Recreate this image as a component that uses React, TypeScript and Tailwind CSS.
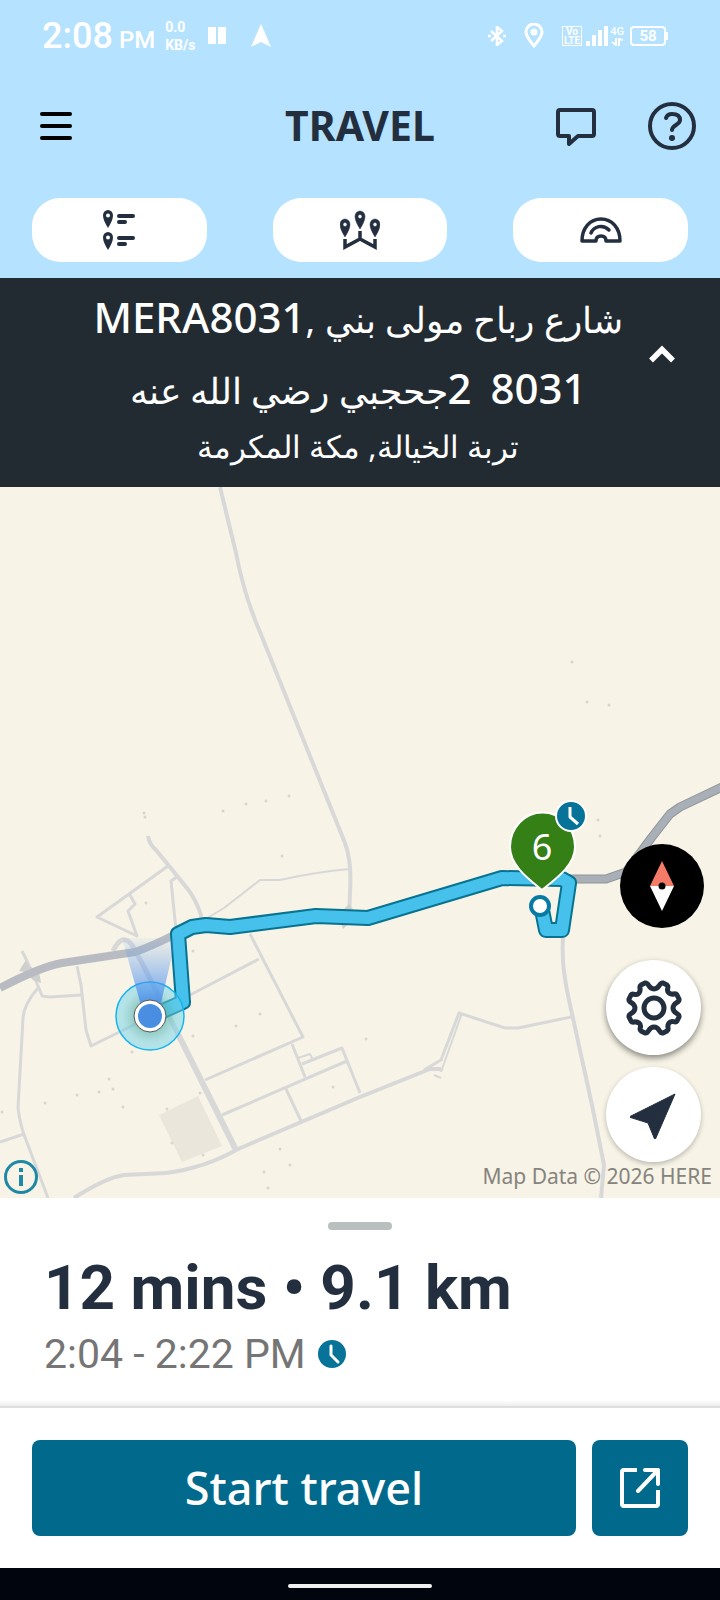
import { ChevronUp } from "lucide-react";

const ROADS = [
  { d: "M220 487 L236 553 Q244 595 260 632 L345 843 Q352 862 350 892 L349 920", w: 4 },
  { d: "M148 836 Q149 844 156 850 L174 872 L190 892 Q200 908 202 920", w: 4 },
  { d: "M168 866 L97 917 L137 936 L128 911 L135 904 L130 895", w: 3 },
  { d: "M178 876 L171 881 L176 930", w: 3 },
  { d: "M204 920 L224 908 L260 880 L280 880 Q315 872 350 869", w: 2 },
  { d: "M22 951 L28 963 Q40 990 42 996 L50 997 L81 995", w: 3 },
  { d: "M77 966 L81 985 L86 1030 L91 1046 L150 1017", w: 3 },
  { d: "M38 988 Q24 1004 23 1018 L18 1108 Q20 1125 26 1140 L48 1198", w: 3 },
  { d: "M0 1142 L24 1134", w: 3 },
  { d: "M113 951 Q122 932 132 945 L143 965 L180 1038", w: 5 },
  { d: "M178 1034 L236 1150", w: 6 },
  { d: "M190 995 L259 959 M250 934 L303 1037 L205 1080", w: 3 },
  { d: "M292 1044 L305 1077 M302 1064 L342 1048 L360 1093 M347 1061 L222 1115 M286 1089 L301 1121", w: 3 },
  { d: "M298 1058 L310 1054 L313 1060", w: 2 },
  { d: "M74 1198 Q105 1178 124 1175 L166 1173 Q205 1168 238 1149 L360 1097 L430 1069 L441 1069", w: 4 },
  { d: "M424 1070 L441 1060 L459 1013 L505 1028 L518 1028 L571 1017", w: 3 },
  { d: "M462 1013 L441 1072 M434 1075 L441 1078", w: 2 },
  { d: "M563 938 Q561 965 569 1000 L592 1105 L604 1165 L601 1198", w: 4 },
];

const DOTS = [
  [144, 813], [145, 817], [223, 811], [246, 804], [266, 801], [289, 796], [282, 856], [146, 903],
  [193, 951], [260, 1014], [236, 1026], [193, 1036], [132, 1052], [109, 1079], [113, 1089], [99, 1092],
  [77, 1095], [45, 1103], [123, 1107], [2, 1112], [167, 1109], [172, 1143], [280, 1149], [290, 1165],
  [264, 1172], [268, 1188], [333, 1087], [366, 1039], [598, 820], [600, 836], [572, 662], [587, 702],
  [609, 705], [200, 1093], [203, 1155],
];

const ROUTE = "M154 1015 L183 1002 L178 934 L192 927 L206 925 L230 927 L316 916 L368 918 L502 878 L562 879 L569 883 L562 930 L546 930 L541 905";

const HIGHWAY = "M568 879h38l20-7 26-35 18-23 10-7 42-20";

const PIN = "M5 18C2 13 0 9 0 5.500a5 5.500 0 0 1 10 0C10 9 8 13 5 18zM5 3.500a2 2 0 1 0 0 4 2 2 0 0 0 0-4z";

function StatusBar() {
  return (
    <div className="flex h-[72px] items-center pl-[42px] pr-[52px] font-['Roboto'] text-white">
      <span className="text-4xl font-medium">2:08</span>
      <span className="ml-1.5 mt-2 text-2xl font-medium">PM</span>
      <span className="ml-2.5 text-sm font-bold leading-[18px]">
        0.0
        <br />
        KB/s
      </span>
      <svg className="ml-3 h-5 w-5" viewBox="0 0 20 20" fill="currentColor">
        <path d="M1 1h8v17H1zM11 1h8v17h-8z" />
      </svg>
      <svg className="ml-6 h-6 w-5" viewBox="0 0 20 24" fill="currentColor">
        <path d="M10 0l10 23-10-5-10 5z" />
      </svg>
      <svg className="ml-auto h-5 w-[18px]" viewBox="0 0 18 20" fill="none" stroke="currentColor" strokeWidth="2.500">
        <path d="M3 5l11 10-5 4V1l5 4L3 15M0 10h3M15 10h3" />
      </svg>
      <svg className="ml-[18px] h-[26px] w-5" viewBox="0 0 20 26" fill="none" stroke="currentColor" strokeWidth="3">
        <path d="M10 23C5 17 2 13 2 9a8 8 0 0 1 16 0c0 4-3 8-8 14z" />
        <circle cx="10" cy="9" r="2" />
      </svg>
      <span className="ml-[18px] flex h-5 w-5 flex-col items-center justify-center border border-white text-[10px] font-bold leading-[9px]">
        <span>Vo</span>
        <span>LTE</span>
      </span>
      <svg className="ml-1 h-5 w-6" viewBox="0 0 24 20" fill="currentColor">
        <path d="M0 15h4v5H0zM6 9h4v11H6zM12 4h4v16h-4zM18 0h4v20h-4z" />
      </svg>
      <span className="flex h-5 w-3.5 flex-col items-center text-[11px] font-medium leading-3">
        4G
        <svg className="h-2 w-3" viewBox="0 0 12 8" fill="none" stroke="currentColor" strokeWidth="2">
          <path d="M5 0v7L1 4M8 8V1l4 1" />
        </svg>
      </span>
      <span className="ml-1.5 flex items-center">
        <span className="flex h-5 w-9 items-center justify-center rounded-sm border-2 border-white text-[15px] font-bold leading-4">
          58
        </span>
        <span className="h-2 w-0.5 bg-white" />
      </span>
    </div>
  );
}

function ListIcon() {
  return (
    <svg className="h-10 w-8" viewBox="0 0 32 40" fill="#232f3e">
      {[0, 22].map((y) => (
        <g key={y} transform={`translate(0 ${y})`}>
          <path fillRule="evenodd" d={PIN} />
          <rect x="14" y="4" width="18" height="4" rx="2" />
          <rect x="14" y="10" width="10" height="4" rx="2" />
        </g>
      ))}
    </svg>
  );
}

function MapPinsIcon() {
  return (
    <svg className="h-10 w-10" viewBox="0 0 40 40" fill="#232f3e" stroke="#232f3e">
      {[[0, 9], [15, 1], [30, 9]].map(([x, y]) => (
        <path key={x} transform={`translate(${x} ${y})`} fillRule="evenodd" d={PIN} strokeWidth="0.500" />
      ))}
      <path d="M5 29v8l15-8 15 8v-8M20 21v8" fill="none" strokeWidth="3.500" />
    </svg>
  );
}

function RainbowIcon() {
  return (
    <svg className="h-10 w-[42px]" viewBox="0 0 42 40" fill="none" stroke="#232f3e" strokeWidth="3.500" strokeLinecap="round" strokeLinejoin="round">
      <path d="M2 31C2 18 10 9 21 9s19 9 19 22H26c0-4-2-5-5-5s-5 1-5 5z" />
      <path d="M11 23c3-7 12-9 18-3" />
    </svg>
  );
}

function ClockBadge() {
  return (
    <svg className="h-7 w-7" viewBox="0 0 28 28">
      <circle cx="14" cy="14" r="14" fill="#077398" />
      <path d="M13 6v9l7 7" fill="none" stroke="#fff" strokeWidth="3" strokeLinecap="round" />
    </svg>
  );
}

function MapCanvas() {
  return (
    <svg className="absolute inset-0 h-full w-full" viewBox="0 487 720 711" preserveAspectRatio="xMidYMid slice" fill="none" strokeLinejoin="round">
      <defs>
        <linearGradient id="beam" x1="0" y1="0" x2="0" y2="1">
          <stop offset="0" stopColor="#5d9cf0" stopOpacity="0.05" />
          <stop offset="1" stopColor="#3f86ee" stopOpacity="0.95" />
        </linearGradient>
        <radialGradient id="halo">
          <stop offset="0.45" stopColor="#5cb5ad" stopOpacity="0.65" />
          <stop offset="0.8" stopColor="#6fd0e6" stopOpacity="0.5" />
          <stop offset="1" stopColor="#6fd4ee" stopOpacity="0.5" />
        </radialGradient>
      </defs>
      <path d="M159 1115l39-19 24 50-40 16z" fill="#ebe6dc" />
      {ROADS.map((road) => (
        <path key={road.d} d={road.d} stroke="#d8d8d8" strokeWidth={road.w} />
      ))}
      {DOTS.map(([x, y]) => (
        <circle key={`${x}-${y}`} cx={x} cy={y} r="1.500" fill="#d9d5cb" />
      ))}
      <path d="M26 960l3 6 10 5 2 12-8-3-8-8-6-1zM338 915l11-11 8 11-14 14z" fill="#cfcfcc" />
      <path d="M0 988Q40 967 62 963L135 952Q150 947 176 934" stroke="#b8bcc2" strokeWidth="8" />
      <path d={HIGHWAY} stroke="#8f959a" strokeWidth="9" />
      <path d={HIGHWAY} stroke="#a9afb6" strokeWidth="7" />
      <path d={ROUTE} stroke="#077391" strokeWidth="16" />
      <path d={ROUTE} stroke="#45c1ec" strokeWidth="12" />
      <circle cx="540" cy="906" r="9" fill="#fff" stroke="#077ba3" strokeWidth="4" />
      <circle cx="150" cy="1016" r="34" fill="url(#halo)" stroke="#14b4ee" strokeWidth="1.500" />
      <path d="M122 938h54l-18 78h-14z" fill="url(#beam)" />
      <circle cx="150" cy="1016" r="16" fill="#fff" stroke="#555" strokeWidth="1" />
      <circle cx="150" cy="1016" r="12" fill="#4a8ee2" />
      <path d="M542 890C530 880 510 866 510 847a32 34 0 0 1 65 0c0 19-21 33-33 43z" fill="#348017" stroke="#fff" strokeWidth="2" />
      <text x="542" y="860" textAnchor="middle" fill="#fff" fontSize="36" fontFamily="Noto Sans, sans-serif">
        6
      </text>
      <circle cx="571" cy="816" r="15" fill="#077398" stroke="#fff" strokeWidth="2" />
      <path d="M570 807v10l8 7" stroke="#fff" strokeWidth="3" />
    </svg>
  );
}

export default function App() {
  return (
    <div className="flex min-h-screen flex-col bg-white font-['Noto_Sans',sans-serif] text-[#232f3e]">
      <header className="bg-[#b5e3ff] pb-4">
        <StatusBar />
        <div className="grid h-[108px] grid-cols-[1fr_auto_1fr] items-center px-6">
          <button aria-label="Menu" className="ml-4 flex w-8 flex-col gap-2">
            <span className="h-1 rounded-full bg-black" />
            <span className="h-1 rounded-full bg-black" />
            <span className="h-1 rounded-full bg-black" />
          </button>
          <h1 className="text-[41px] font-bold">TRAVEL</h1>
          <div className="flex items-center justify-end gap-[52px]">
            <button aria-label="Messages">
              <svg className="h-10 w-10" viewBox="0 0 40 40" fill="none" stroke="currentColor" strokeWidth="4" strokeLinejoin="round">
                <path d="M4 4h32q2 0 2 2v22q0 2-2 2H22l-9 8v-8H4q-2 0-2-2V6q0-2 2-2z" />
              </svg>
            </button>
            <button aria-label="Help">
              <svg className="h-12 w-12" viewBox="0 0 48 48" fill="none" stroke="currentColor" strokeWidth="4" strokeLinecap="round">
                <circle cx="24" cy="24" r="22" />
                <path d="M18 16c1-3 3-4 6-4 5 0 8 2 8 6 0 5-8 5-8 10" />
                <circle cx="24" cy="36" r="3" fill="currentColor" stroke="none" />
              </svg>
            </button>
          </div>
        </div>
        <nav className="flex gap-[66px] px-8 pt-[18px]">
          <button aria-label="Stop list" className="flex h-16 flex-1 items-center justify-center rounded-[28px] bg-white">
            <ListIcon />
          </button>
          <button aria-label="Stop map" className="flex h-16 flex-1 items-center justify-center rounded-[28px] bg-white">
            <MapPinsIcon />
          </button>
          <button aria-label="Overview" className="flex h-16 flex-1 items-center justify-center rounded-[28px] bg-white">
            <RainbowIcon />
          </button>
        </nav>
      </header>

      <section className="flex h-[209px] items-center bg-[#232b32] pl-[76px] pr-9 text-white">
        <div className="flex-1 pb-4 text-center">
          <p dir="rtl" className="text-4xl leading-[68px]">
            شارع رباح مولى بني ,<span className="text-[42px] font-medium">MERA8031</span>
          </p>
          <p dir="rtl" className="whitespace-pre text-4xl leading-[68px]">
            <span className="text-[42px] font-medium">8031</span>
            {"  "}
            <span className="text-[42px] font-medium">2</span>جحجبي رضي الله عنه
          </p>
          <p dir="rtl" className="text-[31px] leading-[42px]">تربة الخيالة, مكة المكرمة</p>
        </div>
        <button aria-label="Collapse address" className="mb-14">
          <ChevronUp size={44} strokeWidth={3} strokeLinecap="butt" strokeLinejoin="miter" />
        </button>
      </section>

      <main className="relative min-h-[480px] flex-1 overflow-hidden bg-[#f7f3e6]">
        <MapCanvas />
        <button aria-label="Map information" className="absolute bottom-1 left-1">
          <svg className="h-[34px] w-[34px]" viewBox="0 0 34 34" fill="none" stroke="#1f89a5" strokeWidth="3">
            <circle cx="17" cy="17" r="15.500" />
            <path d="M17 15v11M17 8v4" strokeWidth="4" />
          </svg>
        </button>
        <div className="absolute bottom-9 right-4 flex flex-col items-center gap-3">
          <button aria-label="Compass" className="mb-5 ml-[17px]">
            <svg className="h-[84px] w-[84px]" viewBox="0 0 84 84">
              <circle cx="42" cy="42" r="42" fill="#000" />
              <path d="M42 17l12 25H30z" fill="#f47b67" />
              <path d="M42 67l12-25H30z" fill="#fff" />
              <circle cx="42" cy="42" r="3.500" fill="#000" />
            </svg>
          </button>
          <button aria-label="Settings" className="flex h-[95px] w-[95px] items-center justify-center rounded-full bg-white shadow-[0_3px_6px_rgba(0,0,0,0.45)]">
            <svg className="h-[58px] w-[58px]" viewBox="0 0 58 58" fill="none" stroke="currentColor" strokeWidth="5" strokeLinejoin="round">
              <path d="M20 4C24 3 23 10 29 10S34 3 38 4L42 6C45 8 40 11 44 14S50 13 52 16L54 20C55 24 48 23 48 29S55 34 54 38L52 42C50 45 47 40 44 44S45 50 42 52L38 54C34 55 35 48 29 48S24 55 20 54L16 52C13 50 18 47 14 44S8 45 6 42L4 38C3 34 10 35 10 29S3 24 4 20L6 16C8 13 11 18 14 14S13 8 16 6Z" />
              <circle cx="29" cy="29" r="10" />
            </svg>
          </button>
          <button aria-label="Recenter" className="flex h-[95px] w-[95px] items-center justify-center rounded-full bg-white shadow-[0_2px_5px_rgba(0,0,0,0.25)]">
            <svg className="h-12 w-12" viewBox="2 -2 48 48" fill="currentColor" stroke="currentColor" strokeLinejoin="round">
              <path d="M47 1L27 47 20 30 1 24z" />
            </svg>
          </button>
        </div>
        <p className="absolute bottom-1.5 right-2 text-[21px] leading-8 text-[#85837d]">Map Data © 2026 HERE</p>
      </main>

      <section className="border-b-2 border-[#dedede] bg-white font-['Roboto']">
        <div className="mx-auto mt-6 h-2 w-16 rounded-full bg-[#b9bfbf]" />
        <h2 className="mt-5 px-11 text-[62px] font-bold leading-[76px]">12 mins • 9.1 km</h2>
        <p className="flex items-center gap-3 px-11 text-[41px] leading-[56px] text-[#757575]">
          2:04 - 2:22 PM
          <ClockBadge />
        </p>
        <div className="mt-[18px] h-1.5 bg-linear-to-b from-white to-[#ededed]" />
      </section>

      <footer>
        <div className="flex gap-4 p-8">
          <button className="h-24 flex-1 rounded-lg bg-[#00698c] text-[45px] font-medium text-white">Start travel</button>
          <button aria-label="Open in maps" className="flex h-24 w-24 items-center justify-center rounded-lg bg-[#00698c] text-white">
            <svg className="h-10 w-10" viewBox="0 0 40 40" fill="none" stroke="currentColor" strokeWidth="4" strokeLinejoin="round">
              <path d="M17 2H4q-2 0-2 2v32q0 2 2 2h32q2 0 2-2V22" />
              <path d="M25 2h13v14M38 2L18 23" strokeLinecap="round" />
            </svg>
          </button>
        </div>
        <div className="flex h-8 items-center justify-center bg-[#01060e]">
          <span className="mt-1 h-1 w-36 rounded-full bg-[#f0f0f0]" />
        </div>
      </footer>
    </div>
  );
}
